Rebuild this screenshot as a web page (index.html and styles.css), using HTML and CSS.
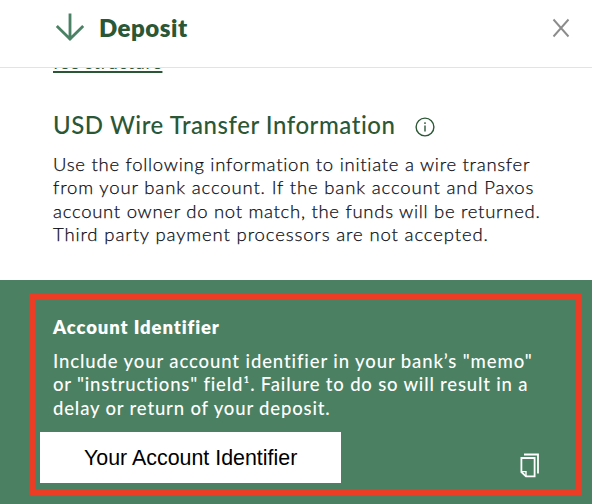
FILE: index.html
```html
<!DOCTYPE html>
<html lang="en">
<head>
  <meta charset="UTF-8" />
  <meta name="viewport" content="width=device-width, initial-scale=1.0"/>
  <title>Deposit</title>
  <link rel="stylesheet" href="styles.css">
</head>
<body>
  <header class="header">
    <svg class="arrow" width="30" height="30" viewBox="0 0 30 30" fill="none" stroke="#4b8164" stroke-width="2.8">
      <path d="M15 0.5V27M1.8 13L15 26L28.2 13" />
    </svg>
    <h1>Deposit</h1>
    <svg class="close" width="18" height="20" viewBox="0 0 18 20" fill="none" stroke="#8c8c8c" stroke-width="1.9">
      <path d="M1.5 1.5L16.5 18.5M16.5 1.5L1.5 18.5" />
    </svg>
  </header>

  <main class="content">
    <div class="fee-link"><a href="#">fee structure</a></div>
    <div class="title">
      <h2>USD Wire Transfer Information</h2>
      <svg class="info" width="20" height="20" viewBox="0 0 20 20" fill="none" stroke="#2b5736" stroke-width="1.4">
        <circle cx="10" cy="10" r="8.9" />
        <path d="M10 8.5V14.5M10 5.3V7" />
      </svg>
    </div>
    <p class="intro">
      <span class="l1">Use the following information to initiate a wire transfer</span>
      <span class="l2">from your bank account. If the bank account and Paxos</span>
      <span class="l3">account owner do not match, the funds will be returned.</span>
      <span class="l4">Third party payment processors are not accepted.</span>
    </p>
  </main>

  <section class="account">
    <div class="frame">
      <h3>Account Identifier</h3>
      <p class="note">
        <span class="n1">Include your account identifier in your bank’s "memo"</span>
        <span class="n2">or "instructions" field¹. Failure to do so will result in a</span>
        <span class="n3">delay or return of your deposit.</span>
      </p>
      <div class="row">
        <div class="identifier">Your Account Identifier</div>
        <svg class="copy" width="20" height="25" viewBox="0 0 20 25" fill="none" stroke="#fff" stroke-width="1.8">
          <path d="M4 1.5H18V20.5" />
          <path d="M1.4 5H14.6V23.4H6L1.4 19Z" />
          <path d="M1.4 18.6H6V23.4" stroke-width="1.4" />
        </svg>
      </div>
    </div>
  </section>
</body>
</html>
```
FILE: styles.css
```css
body {
  margin: 0;
  height: 504px;
  overflow: hidden;
  background: #fff;
  font-family: Lato, sans-serif;
  color: #0b0d16;
}
h1, h2, h3, p {
  margin: 0;
}
.header {
  display: flex;
  align-items: center;
  height: 68px;
  padding: 0 22px 11px 55px;
  box-sizing: border-box;
  border-bottom: 1px solid #e3e3e3;
}
h1 {
  margin-left: 14px;
  font-size: 24px;
  line-height: 30px;
  font-weight: 800;
  letter-spacing: 0.5px;
  color: #2b5736;
}
.close {
  margin-left: auto;
}
.content {
  height: 212px;
  padding-left: 53px;
  box-sizing: border-box;
  overflow: hidden;
}
.fee-link {
  height: 24px;
  margin-top: -18px;
  font-size: 18px;
  line-height: 24px;
  letter-spacing: 0.63px;
}
.fee-link a {
  color: #2b5736;
  text-decoration: underline;
  text-decoration-thickness: 1.5px;
  text-underline-offset: 2px;
  text-decoration-skip-ink: none;
}
.title {
  display: flex;
  align-items: center;
  height: 30px;
  margin-top: 36px;
}
h2 {
  font-size: 24px;
  line-height: 30px;
  font-weight: 500;
  letter-spacing: 0.54px;
  white-space: nowrap;
  color: #2b5736;
}
.info {
  margin: 3px 0 0 20px;
}
.intro, .note {
  line-height: 23.3px;
}
.intro {
  margin-top: 13px;
  font-size: 18.5px;
  font-weight: 300;
  -webkit-text-stroke: 0.25px #0b0d16;
}
.intro span, .note span {
  display: block;
  white-space: nowrap;
}
.l1 {
  letter-spacing: 0.73px;
}
.l2 {
  letter-spacing: 0.85px;
}
.l3 {
  letter-spacing: 0.71px;
}
.l4 {
  letter-spacing: 0.87px;
}
.account {
  height: 224px;
  padding: 14px 10px 9px 29px;
  box-sizing: border-box;
  background: #4b8162;
}
.frame {
  height: 201px;
  padding: 15px 36px 0 18px;
  box-sizing: border-box;
  border: 6px solid #eb3d25;
  color: #fff;
}
h3 {
  font-size: 18.5px;
  line-height: 24px;
  font-weight: 800;
  letter-spacing: 0.88px;
}
.note {
  margin-top: 11px;
  font-size: 18.5px;
  font-weight: 500;
}
.n1 {
  letter-spacing: 0.89px;
}
.n2 {
  letter-spacing: 0.81px;
}
.n3 {
  letter-spacing: 0.84px;
}
.row {
  display: flex;
  align-items: center;
  margin: 12px 0 0 -13px;
}
.identifier {
  width: 301px;
  height: 51px;
  padding-left: 44px;
  box-sizing: border-box;
  background: #fff;
  color: #000;
  font: 21.4px/52px "Liberation Sans", Arial, sans-serif;
}
.copy {
  margin: 16px 0 0 auto;
}
```
